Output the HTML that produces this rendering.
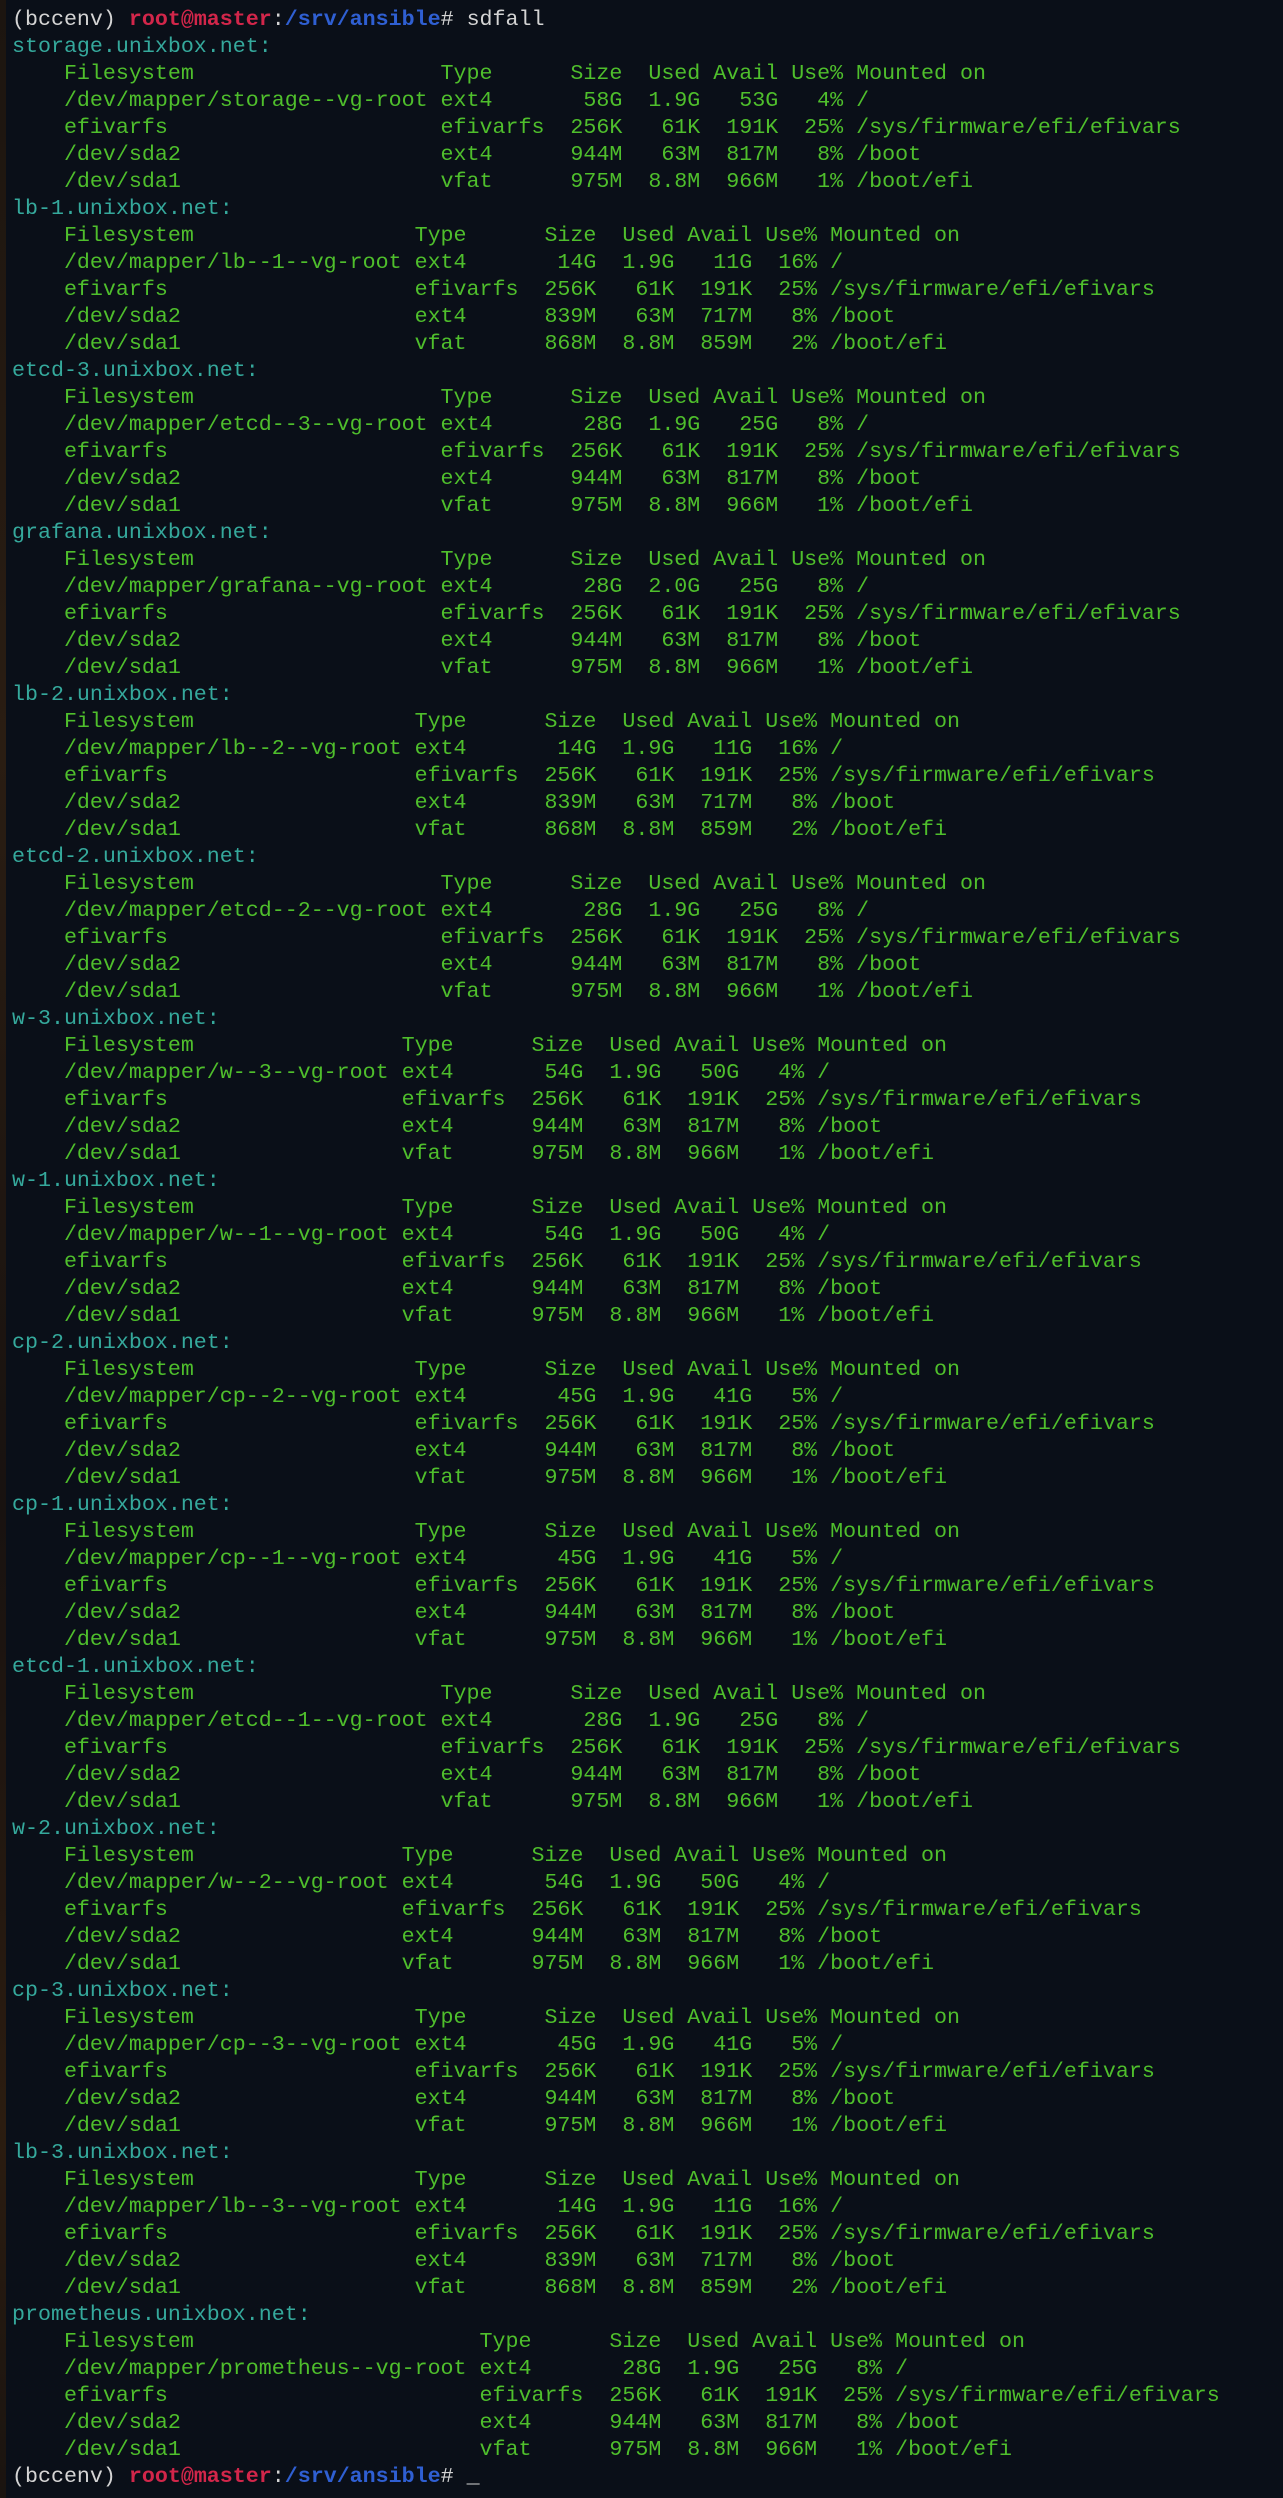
<!DOCTYPE html>
<html><head><meta charset="utf-8"><style>
html,body{margin:0;padding:0;background:#0a0f18;}
body{width:1283px;height:2498px;overflow:hidden;position:relative;}
.strip{position:absolute;left:0;top:0;width:6px;height:2498px;background:linear-gradient(180deg,#1c1510,#2a1d12 30%,#181210 60%,#2b1c10 85%,#1a1410);}
pre{position:absolute;left:12px;top:6px;margin:0;font-family:"Liberation Mono",monospace;font-size:21.65px;line-height:27px;color:#d4d4d4;white-space:pre;}
.g{color:#4fbf2c}.c{color:#35a99c}.r{color:#d2264a;font-weight:bold}.b{color:#2f5fd2;font-weight:bold}
</style></head><body><div class="strip"></div><pre>(bccenv) <span class="r">root@master</span>:<span class="b">/srv/ansible</span># sdfall
<span class="c">storage.unixbox.net:</span>
<span class="g">    Filesystem                   Type      Size  Used Avail Use% Mounted on
    /dev/mapper/storage--vg-root ext4       58G  1.9G   53G   4% /
    efivarfs                     efivarfs  256K   61K  191K  25% /sys/firmware/efi/efivars
    /dev/sda2                    ext4      944M   63M  817M   8% /boot
    /dev/sda1                    vfat      975M  8.8M  966M   1% /boot/efi</span>
<span class="c">lb-1.unixbox.net:</span>
<span class="g">    Filesystem                 Type      Size  Used Avail Use% Mounted on
    /dev/mapper/lb--1--vg-root ext4       14G  1.9G   11G  16% /
    efivarfs                   efivarfs  256K   61K  191K  25% /sys/firmware/efi/efivars
    /dev/sda2                  ext4      839M   63M  717M   8% /boot
    /dev/sda1                  vfat      868M  8.8M  859M   2% /boot/efi</span>
<span class="c">etcd-3.unixbox.net:</span>
<span class="g">    Filesystem                   Type      Size  Used Avail Use% Mounted on
    /dev/mapper/etcd--3--vg-root ext4       28G  1.9G   25G   8% /
    efivarfs                     efivarfs  256K   61K  191K  25% /sys/firmware/efi/efivars
    /dev/sda2                    ext4      944M   63M  817M   8% /boot
    /dev/sda1                    vfat      975M  8.8M  966M   1% /boot/efi</span>
<span class="c">grafana.unixbox.net:</span>
<span class="g">    Filesystem                   Type      Size  Used Avail Use% Mounted on
    /dev/mapper/grafana--vg-root ext4       28G  2.0G   25G   8% /
    efivarfs                     efivarfs  256K   61K  191K  25% /sys/firmware/efi/efivars
    /dev/sda2                    ext4      944M   63M  817M   8% /boot
    /dev/sda1                    vfat      975M  8.8M  966M   1% /boot/efi</span>
<span class="c">lb-2.unixbox.net:</span>
<span class="g">    Filesystem                 Type      Size  Used Avail Use% Mounted on
    /dev/mapper/lb--2--vg-root ext4       14G  1.9G   11G  16% /
    efivarfs                   efivarfs  256K   61K  191K  25% /sys/firmware/efi/efivars
    /dev/sda2                  ext4      839M   63M  717M   8% /boot
    /dev/sda1                  vfat      868M  8.8M  859M   2% /boot/efi</span>
<span class="c">etcd-2.unixbox.net:</span>
<span class="g">    Filesystem                   Type      Size  Used Avail Use% Mounted on
    /dev/mapper/etcd--2--vg-root ext4       28G  1.9G   25G   8% /
    efivarfs                     efivarfs  256K   61K  191K  25% /sys/firmware/efi/efivars
    /dev/sda2                    ext4      944M   63M  817M   8% /boot
    /dev/sda1                    vfat      975M  8.8M  966M   1% /boot/efi</span>
<span class="c">w-3.unixbox.net:</span>
<span class="g">    Filesystem                Type      Size  Used Avail Use% Mounted on
    /dev/mapper/w--3--vg-root ext4       54G  1.9G   50G   4% /
    efivarfs                  efivarfs  256K   61K  191K  25% /sys/firmware/efi/efivars
    /dev/sda2                 ext4      944M   63M  817M   8% /boot
    /dev/sda1                 vfat      975M  8.8M  966M   1% /boot/efi</span>
<span class="c">w-1.unixbox.net:</span>
<span class="g">    Filesystem                Type      Size  Used Avail Use% Mounted on
    /dev/mapper/w--1--vg-root ext4       54G  1.9G   50G   4% /
    efivarfs                  efivarfs  256K   61K  191K  25% /sys/firmware/efi/efivars
    /dev/sda2                 ext4      944M   63M  817M   8% /boot
    /dev/sda1                 vfat      975M  8.8M  966M   1% /boot/efi</span>
<span class="c">cp-2.unixbox.net:</span>
<span class="g">    Filesystem                 Type      Size  Used Avail Use% Mounted on
    /dev/mapper/cp--2--vg-root ext4       45G  1.9G   41G   5% /
    efivarfs                   efivarfs  256K   61K  191K  25% /sys/firmware/efi/efivars
    /dev/sda2                  ext4      944M   63M  817M   8% /boot
    /dev/sda1                  vfat      975M  8.8M  966M   1% /boot/efi</span>
<span class="c">cp-1.unixbox.net:</span>
<span class="g">    Filesystem                 Type      Size  Used Avail Use% Mounted on
    /dev/mapper/cp--1--vg-root ext4       45G  1.9G   41G   5% /
    efivarfs                   efivarfs  256K   61K  191K  25% /sys/firmware/efi/efivars
    /dev/sda2                  ext4      944M   63M  817M   8% /boot
    /dev/sda1                  vfat      975M  8.8M  966M   1% /boot/efi</span>
<span class="c">etcd-1.unixbox.net:</span>
<span class="g">    Filesystem                   Type      Size  Used Avail Use% Mounted on
    /dev/mapper/etcd--1--vg-root ext4       28G  1.9G   25G   8% /
    efivarfs                     efivarfs  256K   61K  191K  25% /sys/firmware/efi/efivars
    /dev/sda2                    ext4      944M   63M  817M   8% /boot
    /dev/sda1                    vfat      975M  8.8M  966M   1% /boot/efi</span>
<span class="c">w-2.unixbox.net:</span>
<span class="g">    Filesystem                Type      Size  Used Avail Use% Mounted on
    /dev/mapper/w--2--vg-root ext4       54G  1.9G   50G   4% /
    efivarfs                  efivarfs  256K   61K  191K  25% /sys/firmware/efi/efivars
    /dev/sda2                 ext4      944M   63M  817M   8% /boot
    /dev/sda1                 vfat      975M  8.8M  966M   1% /boot/efi</span>
<span class="c">cp-3.unixbox.net:</span>
<span class="g">    Filesystem                 Type      Size  Used Avail Use% Mounted on
    /dev/mapper/cp--3--vg-root ext4       45G  1.9G   41G   5% /
    efivarfs                   efivarfs  256K   61K  191K  25% /sys/firmware/efi/efivars
    /dev/sda2                  ext4      944M   63M  817M   8% /boot
    /dev/sda1                  vfat      975M  8.8M  966M   1% /boot/efi</span>
<span class="c">lb-3.unixbox.net:</span>
<span class="g">    Filesystem                 Type      Size  Used Avail Use% Mounted on
    /dev/mapper/lb--3--vg-root ext4       14G  1.9G   11G  16% /
    efivarfs                   efivarfs  256K   61K  191K  25% /sys/firmware/efi/efivars
    /dev/sda2                  ext4      839M   63M  717M   8% /boot
    /dev/sda1                  vfat      868M  8.8M  859M   2% /boot/efi</span>
<span class="c">prometheus.unixbox.net:</span>
<span class="g">    Filesystem                      Type      Size  Used Avail Use% Mounted on
    /dev/mapper/prometheus--vg-root ext4       28G  1.9G   25G   8% /
    efivarfs                        efivarfs  256K   61K  191K  25% /sys/firmware/efi/efivars
    /dev/sda2                       ext4      944M   63M  817M   8% /boot
    /dev/sda1                       vfat      975M  8.8M  966M   1% /boot/efi</span>
(bccenv) <span class="r">root@master</span>:<span class="b">/srv/ansible</span># _</pre></body></html>
